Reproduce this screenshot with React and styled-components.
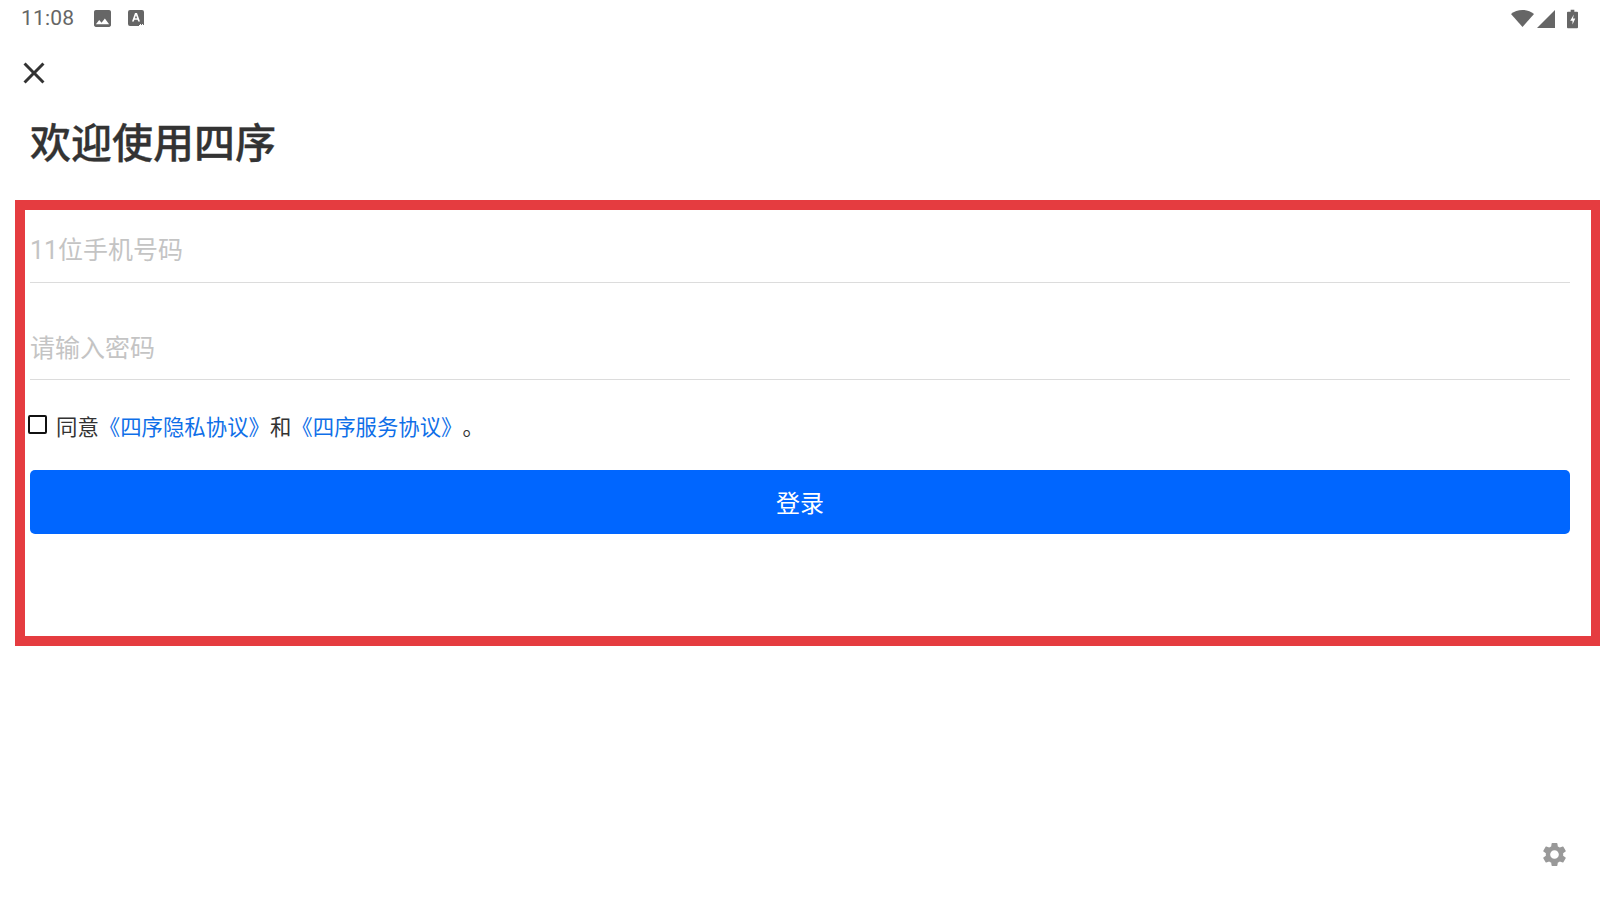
import styled, { createGlobalStyle } from "styled-components";
import { MdClose, MdSettings } from "react-icons/md";

const GlobalStyle = createGlobalStyle`
  html, body {
    margin: 0;
    padding: 0;
    background: #fff;
  }
  * {
    box-sizing: border-box;
  }
  body {
    font-family: "Roboto", "Noto Sans CJK SC", sans-serif;
  }
`;

const Page = styled.div`
  display: flex;
  flex-direction: column;
  width: 1600px;
  height: 900px;
  overflow: hidden;
`;

const StatusBar = styled.header`
  display: flex;
  align-items: center;
  justify-content: space-between;
  height: 37px;
  padding: 0 22px 0 21px;
  color: #666;
`;

const StatusGroup = styled.div`
  display: flex;
  align-items: center;
  gap: ${(p) => p.$gap}px;
`;

const Time = styled.span`
  width: 54px;
  margin-right: 10px;
  font-size: 21px;
  line-height: 37px;
  letter-spacing: 0.2px;
  white-space: nowrap;
`;

const StatusIcon = styled.svg`
  display: block;
  width: ${(p) => p.$w}px;
  height: ${(p) => p.$h}px;
  margin-left: ${(p) => p.$left || 0}px;
  fill: #666;
`;

const CloseRow = styled.div`
  display: flex;
  align-items: center;
  height: 72px;
  padding-left: 16px;
  color: #333;
`;

const Title = styled.h1`
  margin: 0;
  padding-left: 30px;
  height: 91px;
  font-family: "Noto Sans CJK SC", sans-serif;
  font-size: 41px;
  font-weight: 500;
  line-height: 62px;
  color: #333;
  -webkit-text-stroke: 0.3px #333;
`;

const Highlight = styled.section`
  display: flex;
  flex-direction: column;
  height: 446px;
  margin-left: 15px;
  padding: 0 21px 0 5px;
  border: solid #e53c40;
  border-width: 10px 9px 10px 10px;
`;

const FieldRow = styled.div`
  display: flex;
  align-items: center;
  height: ${(p) => p.$h}px;
  border-bottom: 1px solid #dcdcdc;
`;

const Input = styled.input`
  width: 100%;
  height: 100%;
  padding: ${(p) => p.$pad}px 0 0 0;
  border: 0;
  outline: 0;
  background: transparent;
  font-family: "Roboto", "Noto Sans CJK SC", sans-serif;
  font-size: 25px;
  color: #333;

  &::placeholder {
    color: #c4c4c4;
    opacity: 1;
  }
`;

const AgreeRow = styled.label`
  display: flex;
  align-items: center;
  height: 40px;
  margin: 26px 0 0 -2px;
  padding-bottom: 2px;
  font-family: "Noto Sans CJK SC", sans-serif;
  font-size: 21.4px;
  color: #333;
  text-spacing-trim: space-all;
  font-kerning: none;
`;

const Checkbox = styled.input`
  appearance: none;
  flex: none;
  width: 19px;
  height: 19px;
  margin: 0 9px 2px 0;
  border: 2.5px solid #111;
  border-radius: 2px;
  background: #fff;
`;

const Link = styled.span`
  color: #0f6fe8;
`;

const LoginButton = styled.button`
  display: block;
  width: 100%;
  height: 64px;
  margin-top: 24px;
  padding: 0 0 2px;
  border: 0;
  border-radius: 5px;
  background: #0066ff;
  color: #fff;
  font-family: "Noto Sans CJK SC", sans-serif;
  font-size: 24px;
`;

const Footer = styled.footer`
  display: flex;
  justify-content: flex-end;
  margin-top: auto;
  padding: 0 31px 31px 0;
  color: #999;
`;

export default function App() {
  return (
    <Page>
      <GlobalStyle />
      <StatusBar>
        <StatusGroup $gap={9}>
          <Time>11:08</Time>
          <StatusIcon $w={17} $h={17} viewBox="3 3 18 18">
            <path d="M21 19V5c0-1.1-.9-2-2-2H5c-1.1 0-2 .9-2 2v14c0 1.1.9 2 2 2h14c1.1 0 2-.9 2-2zM8.5 13.5l2.5 3.01L14.5 12l4.5 6H5l3.5-4.5z" />
          </StatusIcon>
          <StatusIcon $w={16} $h={17} $left={8} viewBox="0 0 16 17">
            <path
              fillRule="evenodd"
              d="M2 0h12a2 2 0 0 1 2 2v13h-1v-1h-1v1h-1v-1h-1v1h-1v1H2a2 2 0 0 1-2-2V2a2 2 0 0 1 2-2zM7 3 4 11.5h1.8l.6-1.8h3.2l.6 1.8H12L9 3H7zm1 2.2 1.1 3.1H6.9L8 5.200z"
            />
          </StatusIcon>
        </StatusGroup>
        <StatusGroup $gap={3}>
          <StatusIcon $w={23} $h={17} viewBox="0 0 22 17" preserveAspectRatio="none">
            <path d="M11 17 0 4.100C3 1.500 6.800 0 11 0s8 1.500 11 4.100L11 17z" />
          </StatusIcon>
          <StatusIcon $w={18} $h={18} viewBox="0 0 18 18">
            <path d="M0 18 18 0v18H0z" />
          </StatusIcon>
          <StatusIcon $w={11} $h={20} $left={9} viewBox="0 0 12 20">
            <path
              fillRule="evenodd"
              d="M4 0h4v2h3a1 1 0 0 1 1 1v16a1 1 0 0 1-1 1H1a1 1 0 0 1-1-1V3a1 1 0 0 1 1-1h3V0zm3.500 5-4 7h2.500v4l3-6.500H6.500L7.500 5z"
            />
          </StatusIcon>
        </StatusGroup>
      </StatusBar>
      <CloseRow>
        <MdClose size={36} />
      </CloseRow>
      <Title>欢迎使用四序</Title>
      <Highlight>
        <FieldRow $h={73}>
          <Input $pad={8} placeholder="11位手机号码" />
        </FieldRow>
        <FieldRow $h={97}>
          <Input $pad={34} placeholder="请输入密码" />
        </FieldRow>
        <AgreeRow>
          <Checkbox type="checkbox" />
          <span>
            同意<Link>《四序隐私协议》</Link>和<Link>《四序服务协议》</Link>。
          </span>
        </AgreeRow>
        <LoginButton>登录</LoginButton>
      </Highlight>
      <Footer>
        <MdSettings size={29} />
      </Footer>
    </Page>
  );
}
